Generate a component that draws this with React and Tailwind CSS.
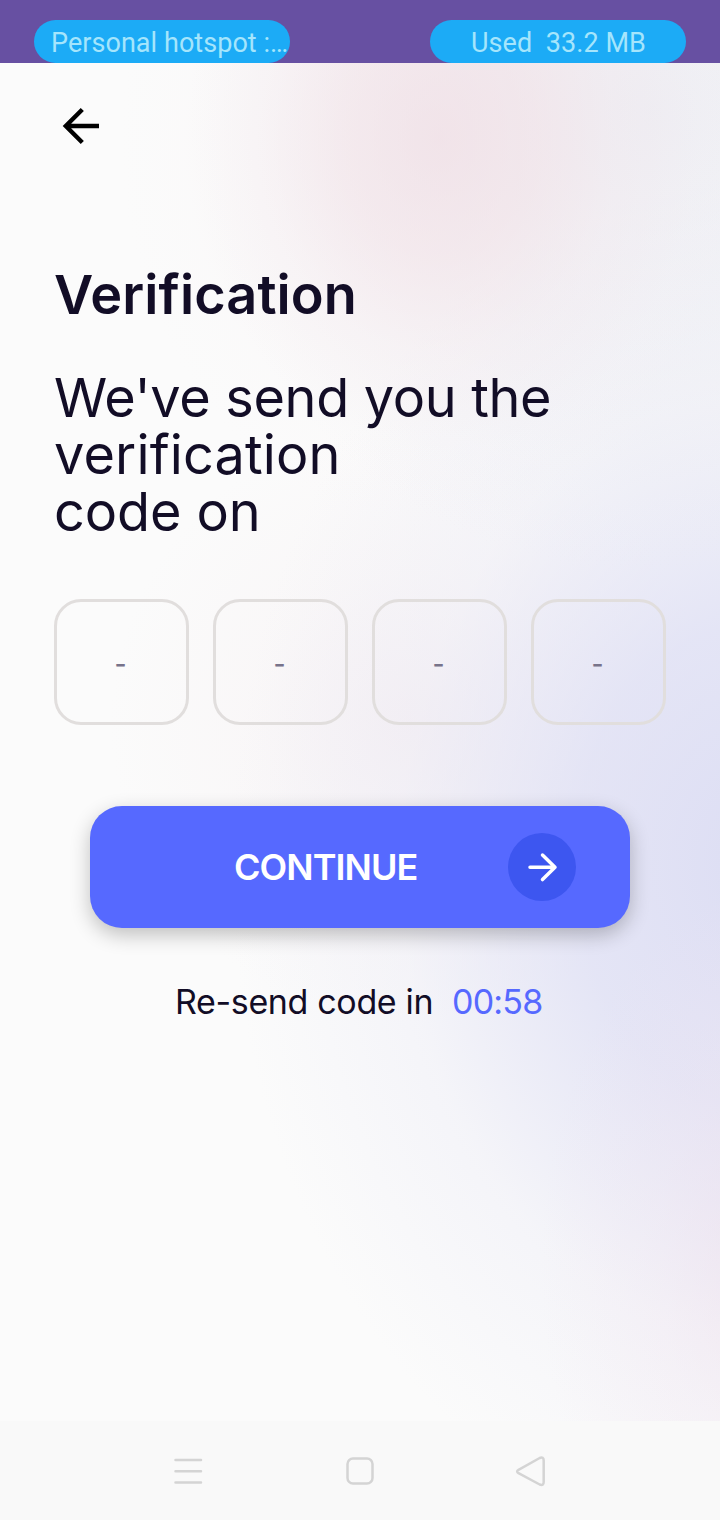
import React from "react";

const glow = [
  "bg-[radial-gradient(ellipse_320px_390px_at_440px_75px,rgba(240,217,224,0.6)_0%,rgba(242,219,225,0.45)_30%,rgba(244,226,231,0.24)_55%,rgba(247,238,240,0.08)_80%,rgba(250,250,250,0)_100%),radial-gradient(ellipse_460px_460px_at_650px_50px,rgba(228,228,238,0.58)_0%,rgba(232,233,241,0.4)_50%,rgba(250,250,250,0)_100%),radial-gradient(ellipse_230px_380px_at_770px_1200px,rgba(238,220,234,0.5)_0%,rgba(240,226,238,0.26)_50%,rgba(250,250,250,0)_100%),radial-gradient(ellipse_530px_690px_at_760px_800px,rgba(218,219,243,0.92)_0%,rgba(221,222,244,0.76)_35%,rgba(233,233,245,0.36)_68%,rgba(250,250,250,0)_100%),radial-gradient(ellipse_300px_300px_at_410px_660px,rgba(240,228,235,0.46)_0%,rgba(244,235,238,0.24)_50%,rgba(250,250,250,0)_100%)]",
].join(" ");

function StatusBar() {
  return (
    <header className="flex h-[63px] shrink-0 items-end justify-between bg-[#6750a2] px-[34px] font-['Roboto',sans-serif] text-[27px] leading-[43px] text-[#a5e5fc]">
      <div className="h-[43px] w-64 overflow-hidden whitespace-nowrap rounded-[21.5px] bg-[#1cabf6] pl-[17px] pt-0.5 tracking-[0.05px]">
        Personal hotspot :…
      </div>
      <div className="h-[43px] w-64 whitespace-pre rounded-[21.5px] bg-[#1cabf6] pl-px pt-0.5 text-center tracking-[0.06px]">
        {"Used  33.2 MB"}
      </div>
    </header>
  );
}

function NavigationBar() {
  return (
    <nav className="flex h-[99px] shrink-0 items-center bg-[#f9f9f9] pl-[173px]">
      <svg className="h-8 w-[30px]" viewBox="0 0 30 32" fill="none" stroke="#d4d4d4" strokeWidth="2.5" strokeLinecap="round">
        <path d="M2.5 5h25.5M2.5 16.300h25.5M2.5 27.500h25.5" />
      </svg>
      <svg className="ml-[142px] h-8 w-[30px]" viewBox="0 0 30 32" fill="none" stroke="#d4d4d4" strokeWidth="2.5">
        <rect x="2.5" y="3.5" width="25" height="25" rx="5.5" />
      </svg>
      <svg className="ml-[140px] h-8 w-[32px]" viewBox="0 0 32 32" fill="none" stroke="#d4d4d4" strokeWidth="2.5" strokeLinejoin="round">
        <path d="M3.5 14.800 24.700 3Q28.700 1.500 28.700 5.500V27Q28.700 31 24.700 29.500L3.500 18.200Q0.800 16.500 3.500 14.800Z" />
      </svg>
    </nav>
  );
}

export default function App() {
  return (
    <div className="flex h-[1520px] w-[720px] flex-col overflow-hidden bg-[#fbfbfb] font-['Inter',sans-serif] text-[#120d26]">
      <StatusBar />
      <main className={`flex flex-1 flex-col ${glow}`}>
        <button className="ml-[60px] mt-[42px] h-[42px] w-[42px]" aria-label="Back">
          <svg className="h-[42px] w-[42px]" viewBox="0 0 42 42" fill="none" stroke="#000" strokeWidth="4.4">
            <path d="M22.300 4.500 5.800 21l16.500 16.500M5.800 21H39" />
          </svg>
        </button>

        <h1 className="ml-[54px] mt-[117px] h-[62px] whitespace-nowrap text-[54px] font-semibold leading-[62px] tracking-[0.1px]">
          Verification
        </h1>
        <p className="ml-[54px] mt-[43px] flex flex-col whitespace-nowrap text-[54px] font-normal leading-[57px]">
          <span className="tracking-[-0.34px]">We've send you the</span>
          <span className="tracking-[0.15px]">verification</span>
          <span className="tracking-[-0.1px]">code on</span>
        </p>

        <div className="mx-[54px] mt-[59px] flex justify-between">
          {[0, 1, 2, 3].map((slot) => (
            <div
              key={slot}
              className="flex h-[126px] w-[135px] items-center justify-center rounded-[27px] border-3 border-[#e1dedd] pr-0.5 pt-[3px] text-[26px] font-medium text-[#77738a]"
            >
              -
            </div>
          ))}
        </div>

        <button className="mx-[90px] mt-[81px] flex h-[122px] items-center rounded-[32px] bg-[#5669ff] pl-[144px] pr-[54px] shadow-[0_7px_20px_rgba(0,0,0,0.24)]">
          <span className="whitespace-nowrap text-[36px] font-semibold leading-none tracking-[-0.95px] text-white">CONTINUE</span>
          <span className="ml-auto flex h-[68px] w-[68px] items-center justify-center rounded-full bg-[#3d56f0]">
            <svg className="h-[34px] w-[34px]" viewBox="0 0 34 34" fill="none" stroke="#fff" strokeWidth="3.500" strokeLinecap="round" strokeLinejoin="round">
              <path d="M5 17.300H30M17.500 5 30 17.300 17.500 29.600" />
            </svg>
          </span>
        </button>

        <div className="ml-[175px] mt-[52px] flex whitespace-nowrap text-[34px] font-normal leading-[44px]">
          <span className="w-[259px] tracking-[-0.35px]">Re-send code in</span>
          <span className="ml-[18px] tracking-[-0.8px] text-[#5669ff]">00:58</span>
        </div>
      </main>
      <NavigationBar />
    </div>
  );
}
